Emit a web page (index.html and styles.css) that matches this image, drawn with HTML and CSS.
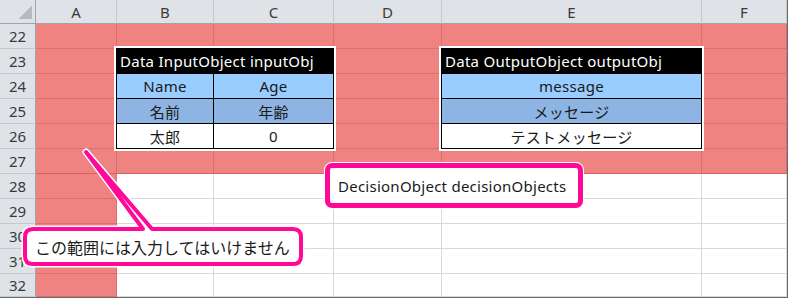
FILE: index.html
```html
<!DOCTYPE html>
<html lang="ja">
<head>
    <meta charset="UTF-8">
    <title>Decision table sheet</title>
    <link rel="stylesheet" href="styles.css">
</head>
<body>
    <div class="sheet">
        <!-- background grid: headers + cells -->
        <div class="cells">
            <div class="corner"><span class="corner-mark"></span></div>
            <div class="col-head">A</div>
            <div class="col-head">B</div>
            <div class="col-head">C</div>
            <div class="col-head">D</div>
            <div class="col-head">E</div>
            <div class="col-head">F</div>

            <div class="row-head">22</div>
            <div class="c red"></div><div class="c red"></div><div class="c red"></div><div class="c red"></div><div class="c red"></div><div class="c red"></div>
            <div class="row-head">23</div>
            <div class="c red"></div><div class="c red"></div><div class="c red"></div><div class="c red"></div><div class="c red"></div><div class="c red"></div>
            <div class="row-head">24</div>
            <div class="c red"></div><div class="c red"></div><div class="c red"></div><div class="c red"></div><div class="c red"></div><div class="c red"></div>
            <div class="row-head">25</div>
            <div class="c red"></div><div class="c red"></div><div class="c red"></div><div class="c red"></div><div class="c red"></div><div class="c red"></div>
            <div class="row-head">26</div>
            <div class="c red"></div><div class="c red"></div><div class="c red"></div><div class="c red"></div><div class="c red"></div><div class="c red"></div>
            <div class="row-head">27</div>
            <div class="c red edge"></div><div class="c red edge"></div><div class="c red edge"></div><div class="c red edge"></div><div class="c red edge"></div><div class="c red edge"></div>
            <div class="row-head">28</div>
            <div class="c red"></div><div class="c"></div><div class="c"></div><div class="c"></div><div class="c"></div><div class="c"></div>
            <div class="row-head">29</div>
            <div class="c red"></div><div class="c"></div><div class="c"></div><div class="c"></div><div class="c"></div><div class="c"></div>
            <div class="row-head">30</div>
            <div class="c red"></div><div class="c"></div><div class="c"></div><div class="c"></div><div class="c"></div><div class="c"></div>
            <div class="row-head">31</div>
            <div class="c red"></div><div class="c"></div><div class="c"></div><div class="c"></div><div class="c"></div><div class="c"></div>
            <div class="row-head">32</div>
            <div class="c red"></div><div class="c"></div><div class="c"></div><div class="c"></div><div class="c"></div><div class="c"></div>
        </div>

        <!-- bordered data blocks sitting on the same grid -->
        <div class="objects">
            <div class="data-block input-block">
                <div class="block-title">Data InputObject inputObj</div>
                <div class="bc head">Name</div>
                <div class="bc head col2">Age</div>
                <div class="bc label">名前</div>
                <div class="bc label col2">年齢</div>
                <div class="bc">太郎</div>
                <div class="bc col2">0</div>
            </div>

            <div class="data-block output-block">
                <div class="block-title">Data OutputObject outputObj</div>
                <div class="bc head">message</div>
                <div class="bc label">メッセージ</div>
                <div class="bc">テストメッセージ</div>
            </div>
        </div>

        <div class="decision-box">DecisionObject decisionObjects</div>

        <div class="note">
            <svg class="note-shape" width="280" height="122" viewBox="0 -80 280 122">
                <path class="note-halo" d="M10 2 H120 L63 -75 L129 2 H270 Q278 2 278 10 V29 Q278 37 270 37 H10 Q2 37 2 29 V10 Q2 2 10 2 Z"/>
                <path class="note-body" d="M10 2 H120 L63 -75 L129 2 H270 Q278 2 278 10 V29 Q278 37 270 37 H10 Q2 37 2 29 V10 Q2 2 10 2 Z"/>
            </svg>
            <span class="note-text">この範囲には入力してはいけません</span>
        </div>
    </div>
</body>
</html>
```

FILE: styles.css
```css
* {
    box-sizing: border-box;
}
body {
    margin: 0;
    font-family: "Noto Sans", "Noto Sans CJK JP", sans-serif;
    font-size: 15px;
    color: #1a1a1a;
    background: #fff;
}
.sheet {
    display: grid;
    position: relative;
    width: 788px;
    height: 298px;
    overflow: hidden;
    border-right: 1px solid #6b6b6b;
    border-bottom: 1px solid #6b6b6b;
}
.cells,
.objects {
    grid-area: 1 / 1;
    display: grid;
    grid-template-columns: 36px 81px 97px 120px 108px 260px 85px;
    grid-template-rows: 24px repeat(10, 25px) 23px;
}

/* headers */
.corner,
.col-head,
.row-head {
    background: #dfe3e8;
    color: #3a3a3a;
    display: flex;
    align-items: center;
    justify-content: center;
}
.corner {
    border-right: 1px solid #9ea5ad;
    border-bottom: 1px solid #9ea5ad;
    align-items: flex-end;
    justify-content: flex-end;
}
.corner-mark {
    width: 14px;
    height: 14px;
    margin: 0 3px 4px 0;
    background: linear-gradient(to top left, #b5bac1 50%, transparent 50%);
}
.col-head {
    border-right: 1px solid #c4c9cf;
    border-bottom: 1px solid #9ea5ad;
}
.row-head {
    border-right: 1px solid #9ea5ad;
    border-bottom: 1px solid #c4c9cf;
}

/* cells */
.c {
    border-right: 1px solid #d9d9d9;
    border-bottom: 1px solid #d9d9d9;
}
.c.red {
    background: #ee8381;
    border-color: #da6f6d;
}
.c.red.edge {
    border-bottom-color: #d4615f;
}

/* data blocks */
.data-block {
    display: grid;
    grid-template-rows: 24px repeat(3, 25px);
    margin: -1px 0 0 -1px;
    border: 1px solid #000;
    outline: 2px solid #fff;
    background: #fff;
    letter-spacing: 0.28px;
}
.input-block {
    grid-column: 3 / 5;
    grid-row: 3 / 7;
    grid-template-columns: 96px 1fr;
}
.output-block {
    grid-column: 6 / 7;
    grid-row: 3 / 7;
    grid-template-columns: 1fr;
}
.block-title {
    grid-column: 1 / -1;
    background: #000;
    color: #fff;
    padding-left: 3px;
    display: flex;
    align-items: center;
}
.bc {
    border-top: 1px solid #000;
    display: flex;
    align-items: center;
    justify-content: center;
}
.bc.col2 {
    border-left: 1px solid #000;
}
.bc.head {
    background: #99ccff;
}
.bc.label {
    background: #8db4e2;
}

/* callouts */
.decision-box {
    position: absolute;
    left: 325px;
    top: 163px;
    width: 258px;
    height: 45px;
    padding-left: 8px;
    display: flex;
    align-items: center;
    background: #fff;
    border: 5px solid #ff0a98;
    border-radius: 7px;
    box-shadow: 0 0 0 1px #fff;
    letter-spacing: 0.25px;
}
.note {
    position: absolute;
    left: 23px;
    top: 227px;
    width: 280px;
    height: 39px;
    display: flex;
    align-items: center;
    padding-left: 12px;
}
.note-shape {
    position: absolute;
    left: 0;
    top: -80px;
    overflow: visible;
}
.note-halo {
    fill: none;
    stroke: #fff;
    stroke-width: 7;
    stroke-linejoin: round;
}
.note-body {
    fill: #fff;
    stroke: #ff0a98;
    stroke-width: 4;
    stroke-linejoin: round;
}
.note-text {
    position: relative;
    font-size: 16px;
}
```
